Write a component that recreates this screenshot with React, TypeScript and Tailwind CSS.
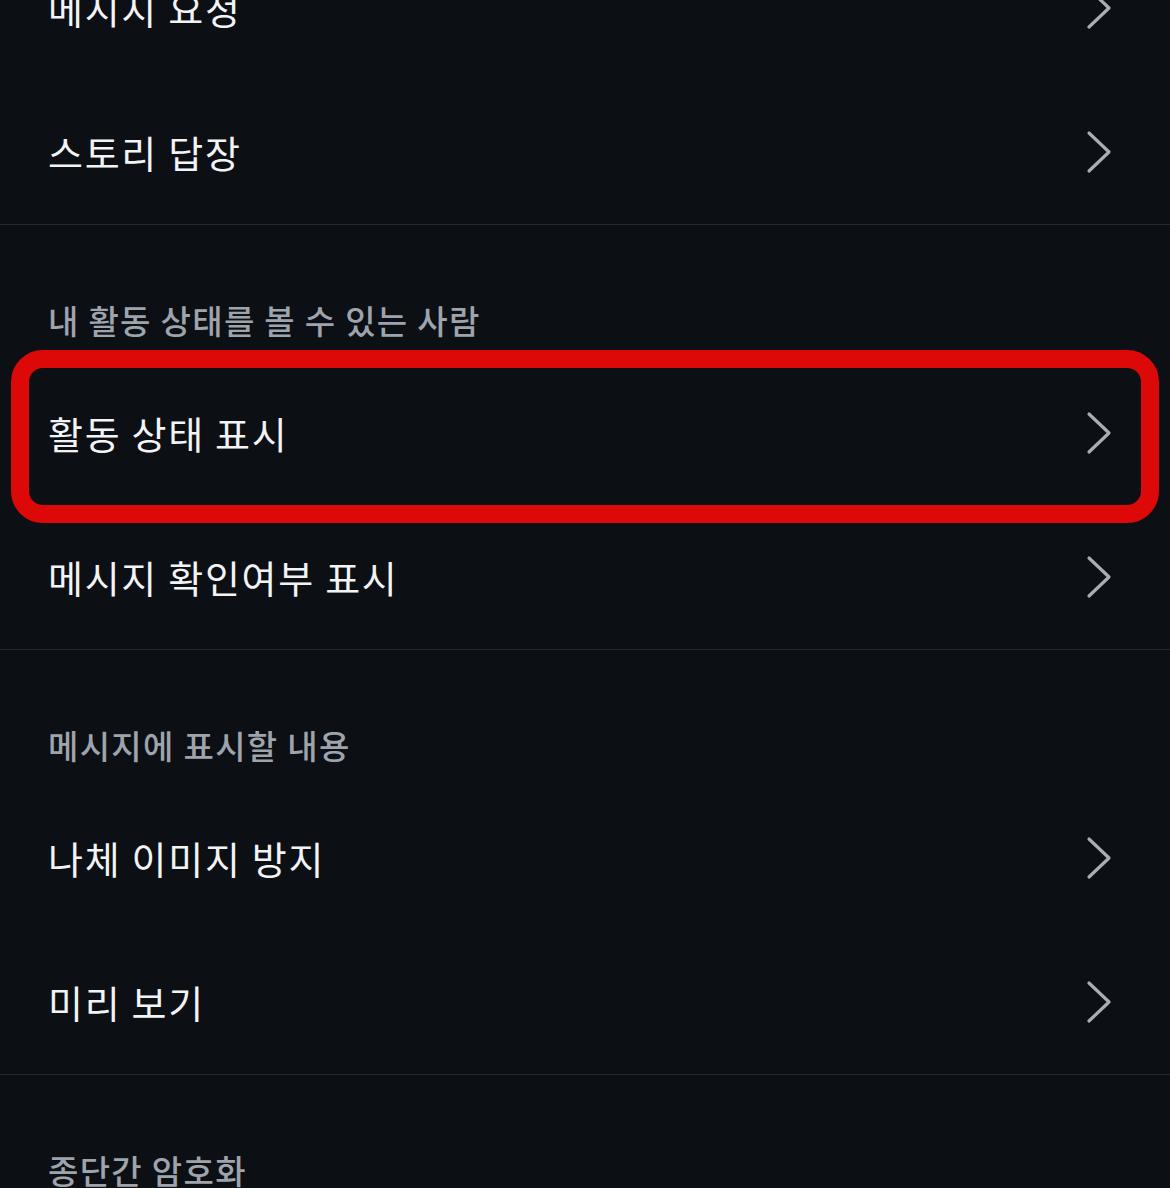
import React from "react";

const font = { fontFamily: '"Noto Sans CJK KR", "Noto Sans", sans-serif' };

function Chevron() {
  return (
    <svg width="26" height="44" viewBox="0 0 26 44" fill="none" className="shrink-0">
      <path d="M3 3 L23 22 L3 41" stroke="#a9aeb4" strokeWidth="3.2" strokeLinecap="round" strokeLinejoin="round" />
    </svg>
  );
}

function Row({ label, highlight }: { label: string; highlight?: boolean }) {
  return (
    <div className="relative flex h-[144px] items-center justify-between pl-[48px] pr-[58px]">
      <span className="text-[38px] leading-[48px] tracking-[0.045em] text-[#f2f3f5]">{label}</span>
      <Chevron />
      {highlight && (
        <div className="pointer-events-none absolute left-[11px] right-[11px] top-[-11px] bottom-[-18px] rounded-[32px] border-[18px] border-[#dd0909]" />
      )}
    </div>
  );
}

function Header({ label }: { label: string }) {
  return (
    <div className="flex h-[136px] items-end pb-[17px] pl-[48px]">
      <span className="text-[33px] font-medium leading-[48px] tracking-[0.04em] text-[#9ea4ac]">{label}</span>
    </div>
  );
}

function Divider() {
  return <div className="h-px w-full bg-[#25282d]" />;
}

export default function App() {
  return (
    <div className="h-[1188px] w-full overflow-hidden bg-[#0c0f14]" style={font}>
      <div className="-mt-16">
        <Row label="메시지 요청" />
        <Row label="스토리 답장" />
        <Divider />
        <Header label="내 활동 상태를 볼 수 있는 사람" />
        <Row label="활동 상태 표시" highlight />
        <Row label="메시지 확인여부 표시" />
        <Divider />
        <Header label="메시지에 표시할 내용" />
        <Row label="나체 이미지 방지" />
        <Row label="미리 보기" />
        <Divider />
        <Header label="종단간 암호화" />
      </div>
    </div>
  );
}
